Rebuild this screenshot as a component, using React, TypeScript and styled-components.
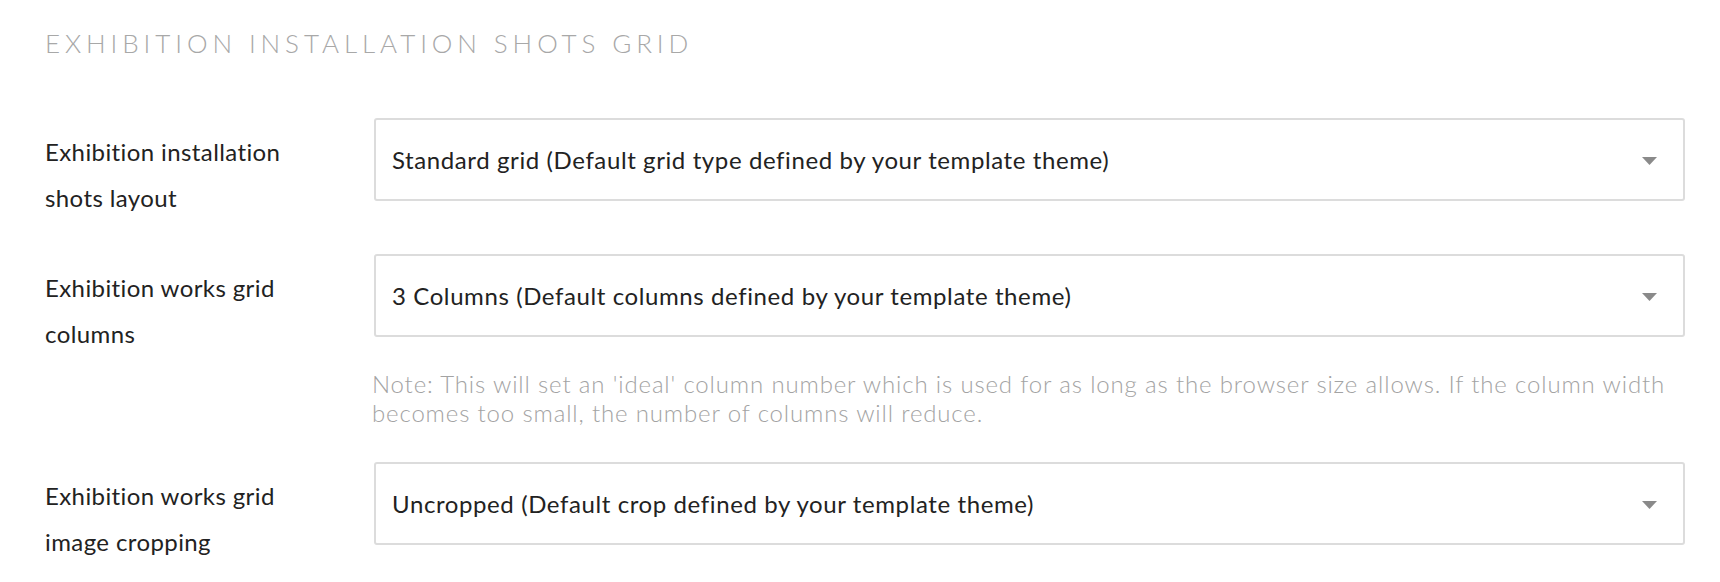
import styled, { createGlobalStyle } from 'styled-components';

const GlobalStyle = createGlobalStyle`
  body {
    margin: 0;
    background: #fff;
    font-family: Lato, "Open Sans", Arial, sans-serif;
    color: #222;
  }
`;

const Page = styled.div`
  padding: 25px 35px 0 45px;
`;

const Heading = styled.h2`
  margin: 0 0 57px;
  font-size: 26px;
  font-weight: 300;
  letter-spacing: 4.9px;
  line-height: 36px;
  color: #a8a8a8;
  text-transform: uppercase;
`;

const Row = styled.div<{ $gap?: number }>`
  display: grid;
  grid-template-columns: 329px 1fr;
  margin-bottom: ${(p) => p.$gap ?? 33}px;
`;

const Label = styled.label`
  padding-top: 11px;
  font-size: 24px;
  letter-spacing: 0.4px;
  line-height: 46px;
  color: #222;
`;

const Field = styled.div`
  display: flex;
  flex-direction: column;
`;

const Select = styled.div`
  height: 83px;
  box-sizing: border-box;
  border: 2px solid #dcdcdc;
  border-radius: 3px;
  display: flex;
  align-items: center;
  justify-content: space-between;
  padding: 0 26px 0 16px;
  font-size: 24px;
  letter-spacing: 0.6px;
  color: #222;
`;

const Arrow = styled.svg`
  width: 15px;
  height: 8px;
  margin-top: 3px;
`;

const Note = styled.p`
  margin: 32px 0 0 -2px;
  font-size: 24px;
  font-weight: 300;
  letter-spacing: 0.85px;
  line-height: 29px;
  color: #a3a3a3;
`;

const rows = [
  {
    label: ['Exhibition installation', 'shots layout'],
    value: 'Standard grid (Default grid type defined by your template theme)',
  },
  {
    label: ['Exhibition works grid', 'columns'],
    value: '3 Columns (Default columns defined by your template theme)',
    note: "Note: This will set an 'ideal' column number which is used for as long as the browser size allows. If the column width becomes too small, the number of columns will reduce.",
    gap: 35,
  },
  {
    label: ['Exhibition works grid', 'image cropping'],
    value: 'Uncropped (Default crop defined by your template theme)',
  },
];

export default function App() {
  return (
    <>
      <GlobalStyle />
      <Page>
        <Heading>Exhibition installation shots grid</Heading>
        {rows.map((row) => (
          <Row key={row.value} $gap={row.gap}>
            <Label>
              {row.label[0]}
              <br />
              {row.label[1]}
            </Label>
            <Field>
              <Select>
                <span>{row.value}</span>
                <Arrow viewBox="0 0 15 8">
                  <polygon points="0,0 15,0 7.5,8" fill="#8a8a8a" />
                </Arrow>
              </Select>
              {row.note && <Note>{row.note}</Note>}
            </Field>
          </Row>
        ))}
      </Page>
    </>
  );
}
